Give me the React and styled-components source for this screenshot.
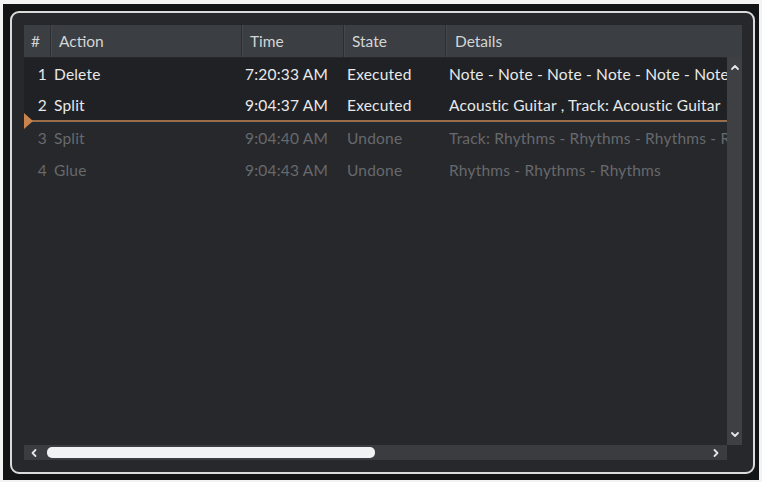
import React from "react";
import styled, { createGlobalStyle } from "styled-components";

const Global = createGlobalStyle`
  html, body { margin: 0; padding: 0; background: #f3f3f3; }
  body { font-family: "Lato", "Open Sans", sans-serif; }
`;

const Frame = styled.div`
  box-sizing: border-box;
  margin: 4px 3px 0 3px;
  width: 756px;
  height: 476px;
  background: #131415;
  padding: 7px 4px 6px 7px;
`;

const Panel = styled.div`
  box-sizing: border-box;
  height: 100%;
  border: 2px solid #dadada;
  border-radius: 9px;
  background: #26282b;
  padding: 12px 11px 12px 12px;
  display: flex;
  flex-direction: column;
`;

const COLS = "26px 191px 102px 102px 1fr";

const Header = styled.div`
  display: grid;
  grid-template-columns: ${COLS};
  height: 32px;
  background: #3b3e42;
  flex: none;
`;

const HeadCell = styled.div`
  display: flex;
  align-items: center;
  padding-left: ${(p) => p.$pad || 8}px;
  color: #d4d5d6;
  font-size: 15.5px;
  border-left: ${(p) => (p.$first ? "none" : "1px solid #2c2e31")};
  box-shadow: ${(p) => (p.$first ? "none" : "inset 1px 0 0 #45484c")};
`;

const Body = styled.div`
  flex: 1;
  display: grid;
  grid-template-columns: 1fr 15px;
  grid-template-rows: 1fr 15px;
  min-height: 0;
`;

const Viewport = styled.div`
  overflow: hidden;
  position: relative;
  padding-top: 1px;
`;

const Row = styled.div`
  position: relative;
  box-sizing: border-box;
  display: grid;
  grid-template-columns: ${COLS};
  height: 32px;
  background: ${(p) => (p.$done ? "#1f2124" : "transparent")};
  color: ${(p) => (p.$done ? "#e9e9ea" : "#67696d")};
  font-size: 15.5px;
  letter-spacing: 0.2px;
  ${(p) =>
    p.$marker &&
    `
    border-bottom: 2px solid #9c6c47;
    box-shadow: 0 1px 0 1px #1f2b36;
  `}
`;

const Marker = styled.div`
  position: absolute;
  left: 0;
  bottom: -9px;
  width: 0;
  height: 0;
  border-top: 8px solid transparent;
  border-bottom: 8px solid transparent;
  border-left: 9px solid #c9834c;
  z-index: 2;
`;

const Cell = styled.div`
  display: flex;
  align-items: center;
  justify-content: ${(p) => (p.$right ? "flex-end" : "flex-start")};
  padding-left: ${(p) => (p.$right ? 0 : 4)}px;
  padding-right: ${(p) => (p.$right ? 3 : 0)}px;
  white-space: nowrap;
  overflow: hidden;
`;

const VScroll = styled.div`
  background: #3e4044;
  display: flex;
  flex-direction: column;
  justify-content: space-between;
  align-items: center;
  padding: 5px 0 6px;
  box-sizing: border-box;
`;

const HScroll = styled.div`
  background: #3a3c40;
  display: flex;
  align-items: center;
  padding: 0 6px 0 5px;
  gap: 8px;
`;

const Thumb = styled.div`
  width: 328px;
  height: 11px;
  border-radius: 5px;
  background: #f1f2f3;
`;

const Spacer = styled.div`
  flex: 1;
`;

const Corner = styled.div`
  background: #26282b;
`;

const Chevron = ({ dir }) => {
  const paths = {
    up: "M2 7 L5 4 L8 7",
    down: "M2 4 L5 7 L8 4",
    left: "M6.5 2 L3.5 5 L6.5 8",
    right: "M3.5 2 L6.5 5 L3.5 8",
  };
  return (
    <svg width="10" height="10" viewBox="0 0 10 10">
      <path d={paths[dir]} fill="none" stroke="#e6e6e6" strokeWidth="1.8" strokeLinecap="round" strokeLinejoin="round" />
    </svg>
  );
};

const rows = [
  { n: 1, a: "Delete", t: "7:20:33 AM", s: "Executed", d: "Note - Note - Note - Note - Note - Note - Note", done: true },
  { n: 2, a: "Split", t: "9:04:37 AM", s: "Executed", d: "Acoustic Guitar , Track: Acoustic Guitar", done: true, marker: true },
  { n: 3, a: "Split", t: "9:04:40 AM", s: "Undone", d: "Track: Rhythms - Rhythms - Rhythms - Rhythms" },
  { n: 4, a: "Glue", t: "9:04:43 AM", s: "Undone", d: "Rhythms - Rhythms - Rhythms" },
];

export default function App() {
  return (
    <>
      <Global />
      <Frame>
        <Panel>
          <Header>
            <HeadCell $first $pad={7}>#</HeadCell>
            <HeadCell>Action</HeadCell>
            <HeadCell>Time</HeadCell>
            <HeadCell>State</HeadCell>
            <HeadCell $pad={9}>Details</HeadCell>
          </Header>
          <Body>
            <Viewport>
              {rows.map((r) => (
                <Row key={r.n} $done={r.done} $marker={r.marker}>
                  <Cell $right>{r.n}</Cell>
                  <Cell>{r.a}</Cell>
                  <Cell>{r.t}</Cell>
                  <Cell>{r.s}</Cell>
                  <Cell>{r.d}</Cell>
                  {r.marker && <Marker />}
                </Row>
              ))}
            </Viewport>
            <VScroll>
              <Chevron dir="up" />
              <Chevron dir="down" />
            </VScroll>
            <HScroll>
              <Chevron dir="left" />
              <Thumb />
              <Spacer />
              <Chevron dir="right" />
            </HScroll>
            <Corner />
          </Body>
        </Panel>
      </Frame>
    </>
  );
}
